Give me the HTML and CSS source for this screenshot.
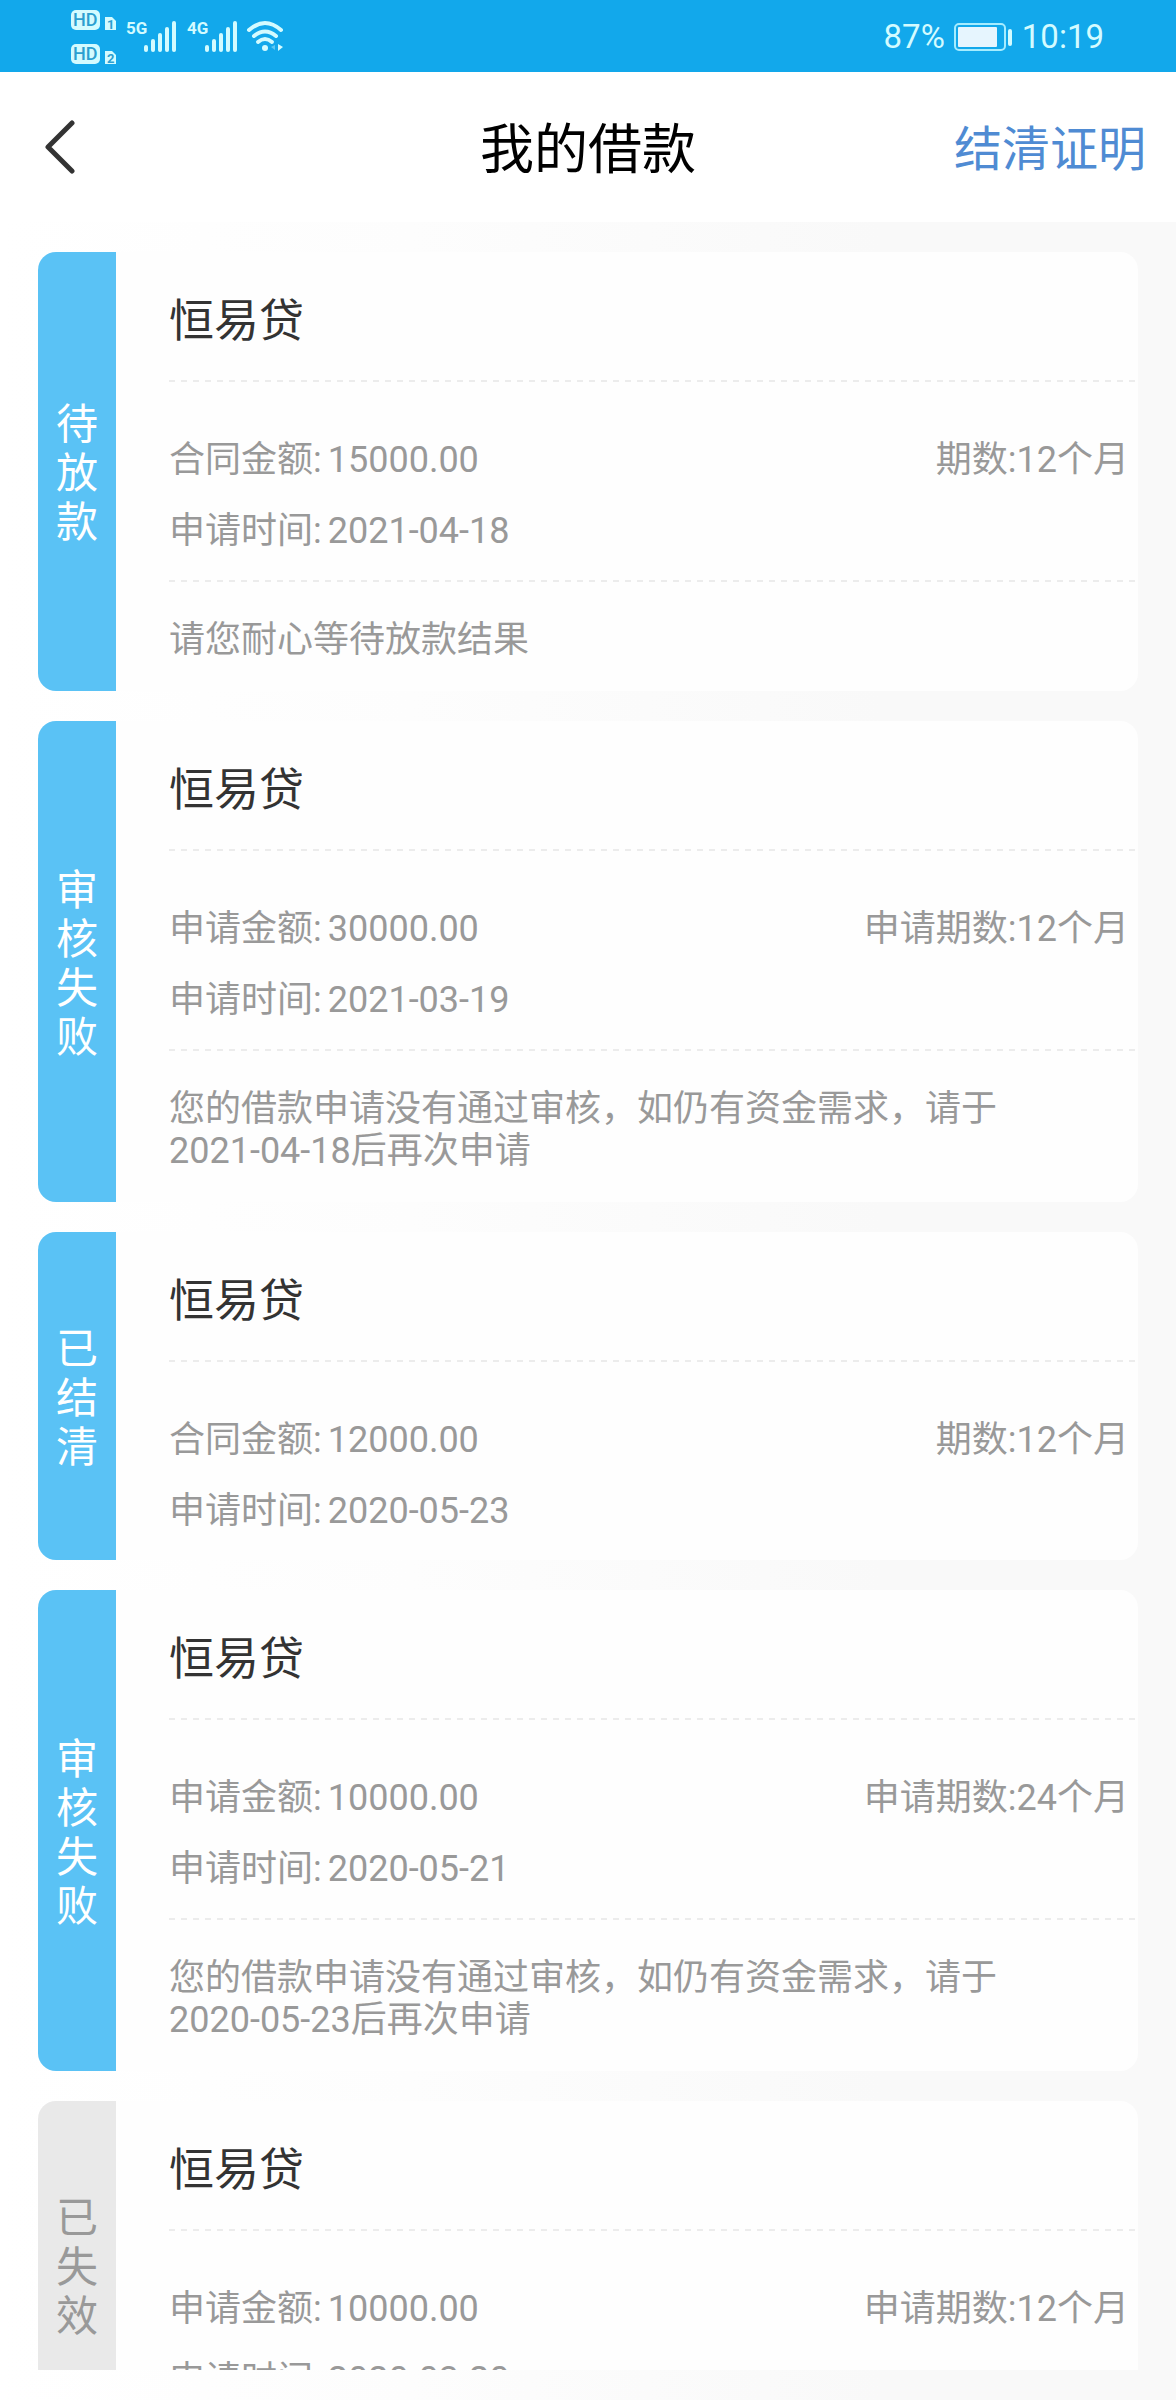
FILE: index.html
```html
<!DOCTYPE html>
<html lang="zh-CN">
<head>
  <meta charset="utf-8">
  <title>我的借款</title>
  <meta name="viewport" content="width=device-width, initial-scale=1">
  <link rel="stylesheet" href="styles.css">
</head>
<body>
  <div class="status-bar">
    <svg class="signals" width="216" height="72" viewBox="0 0 216 72" fill="#d3fbff">
      <!-- HD 1 / HD 2 -->
      <rect x="0" y="10" width="29" height="20" rx="5"/>
      <rect x="0" y="44" width="29" height="20" rx="5"/>
      <path d="M34 17h7l4 4v9h-11z M34 51h7l4 4v9h-11z"/>
      <g class="hd-text">
        <text x="2" y="26">HD</text>
        <text x="2" y="60">HD</text>
        <text class="sim" x="36" y="29">1</text>
        <text class="sim" x="36" y="63">2</text>
      </g>
      <g class="net-text">
        <text x="55" y="34">5G</text>
        <text x="116" y="34">4G</text>
      </g>
      <!-- signal bars -->
      <g id="bars">
        <rect x="73" y="45" width="4" height="7" rx="2"/>
        <rect x="80" y="39" width="4" height="13" rx="2"/>
        <rect x="87" y="33" width="4" height="19" rx="2"/>
        <rect x="94" y="27" width="4" height="25" rx="2"/>
        <rect x="101" y="21" width="4" height="31" rx="2"/>
      </g>
      <use href="#bars" x="61"/>
      <!-- wifi -->
      <g fill="none" stroke="#d3fbff" stroke-width="4" stroke-linecap="round">
        <path d="M178 30Q194 16 210 30"/>
        <path d="M183 36Q194 27 205 36"/>
        <path d="M187 42Q194 36 201 42"/>
      </g>
      <circle cx="194" cy="48" r="3"/>
      <path d="M207 44v7l5-4z"/>
      <path d="M204 45v5l-4-3z" opacity="0.4"/>
    </svg>
    <div class="power">
      <span>87%</span>
      <svg width="59" height="28" viewBox="0 0 59 28">
        <rect x="1" y="1" width="50" height="26" rx="4" fill="none" stroke="#a5ecff" stroke-width="2"/>
        <rect x="4" y="4" width="39" height="20" rx="1" fill="#e6f5fe"/>
        <rect x="54" y="6" width="4" height="17" rx="2" fill="#d3fbff"/>
      </svg>
      <span>10:19</span>
    </div>
  </div>

  <header class="header">
    <button type="button" class="back" aria-label="返回">
      <svg width="30" height="54" viewBox="0 0 30 54" fill="none" stroke="#333" stroke-width="5" stroke-linecap="round" stroke-linejoin="round">
        <path d="M27 3L3 27L27 51"/>
      </svg>
    </button>
    <h1>我的借款</h1>
    <a class="proof" href="#">结清证明</a>
  </header>

  <main class="list">
    <section class="card">
      <div class="state"><span>待放款</span></div>
      <div class="content">
        <h2>恒易贷</h2>
        <div class="info">
          <p><span class="label">合同金额:</span><span>15000.00</span><span class="term">期数:12个月</span></p>
          <p><span class="label">申请时间:</span><span>2021-04-18</span></p>
        </div>
        <div class="note">请您耐心等待放款结果</div>
      </div>
    </section>

    <section class="card">
      <div class="state"><span>审核失败</span></div>
      <div class="content">
        <h2>恒易贷</h2>
        <div class="info">
          <p><span class="label">申请金额:</span><span>30000.00</span><span class="term">申请期数:12个月</span></p>
          <p><span class="label">申请时间:</span><span>2021-03-19</span></p>
        </div>
        <div class="note">您的借款申请没有通过审核，如仍有资金需求，请于<span class="date">2021-04-18</span>后再次申请</div>
      </div>
    </section>

    <section class="card">
      <div class="state"><span>已结清</span></div>
      <div class="content">
        <h2>恒易贷</h2>
        <div class="info">
          <p><span class="label">合同金额:</span><span>12000.00</span><span class="term">期数:12个月</span></p>
          <p><span class="label">申请时间:</span><span>2020-05-23</span></p>
        </div>
      </div>
    </section>

    <section class="card">
      <div class="state"><span>审核失败</span></div>
      <div class="content">
        <h2>恒易贷</h2>
        <div class="info">
          <p><span class="label">申请金额:</span><span>10000.00</span><span class="term">申请期数:24个月</span></p>
          <p><span class="label">申请时间:</span><span>2020-05-21</span></p>
        </div>
        <div class="note">您的借款申请没有通过审核，如仍有资金需求，请于<span class="date">2020-05-23</span>后再次申请</div>
      </div>
    </section>

    <section class="card expired">
      <div class="state"><span>已失效</span></div>
      <div class="content">
        <h2>恒易贷</h2>
        <div class="info">
          <p><span class="label">申请金额:</span><span>10000.00</span><span class="term">申请期数:12个月</span></p>
          <p><span class="label">申请时间:</span><span>2020-03-20</span></p>
        </div>
      </div>
    </section>
  </main>
</body>
</html>
```
FILE: styles.css
```css
* {
  box-sizing: border-box;
}

body {
  display: flex;
  flex-direction: column;
  height: 100vh;
  margin: 0;
  padding-bottom: 30px;
  font-family: Roboto, "Noto Sans CJK SC", sans-serif;
  font-size: 36px;
  line-height: 42px;
  color: #999;
  background: linear-gradient(to right, #fff 0%, #fdfdfd 35%, #f9f9f9 75%);
}

h1,
h2,
p {
  margin: 0;
  font-weight: 400;
}

.status-bar {
  display: flex;
  flex-shrink: 0;
  justify-content: space-between;
  align-items: center;
  height: 72px;
  padding: 0 72px 0 71px;
  background-color: #12a8eb;
  color: #d3fbff;
}

.hd-text {
  font-size: 18px;
  font-weight: 500;
  fill: #2c9fd0;
}

.hd-text .sim {
  font-size: 13px;
  font-weight: 700;
}

.net-text {
  font-size: 17px;
  font-weight: 700;
}

.power {
  display: flex;
  align-items: center;
  gap: 9px;
  padding-top: 2px;
  font-size: 33px;
}

.header {
  display: grid;
  flex-shrink: 0;
  grid-template-columns: 1fr auto 1fr;
  align-items: center;
  height: 150px;
  padding: 0 30px;
  background-color: #fff;
}

.header h1 {
  padding-top: 8px;
  font-size: 54px;
  line-height: 60px;
  color: #000;
}

.back {
  justify-self: start;
  padding: 0 15px;
  border: none;
  background: none;
  cursor: pointer;
}

.back svg {
  display: block;
}

.proof {
  justify-self: end;
  padding-top: 6px;
  font-size: 48px;
  line-height: 54px;
  color: #4f8bd3;
  text-decoration: none;
}

.list {
  display: flex;
  flex: 1;
  flex-direction: column;
  gap: 30px;
  min-height: 0;
  padding: 30px 38px 0;
  overflow-y: auto;
  scrollbar-width: none;
}

.card {
  display: flex;
  flex-shrink: 0;
  border-radius: 18px;
  background-color: #fefefe;
  overflow: hidden;
}

.state {
  display: flex;
  flex-shrink: 0;
  align-items: center;
  justify-content: center;
  width: 78px;
  padding-top: 4px;
  background-color: #5ac2f5;
  color: #fff;
  font-size: 42px;
  line-height: 49px;
}

/* one character per line */
.state span {
  width: 42px;
  word-break: break-all;
}

.expired .state {
  background-color: #e9e9e9;
  color: #999;
}

.content {
  flex: 1;
  padding-left: 53px;
}

.content h2 {
  padding: 44px 0 34px;
  font-size: 45px;
  line-height: 52px;
  color: #333;
}

/* dashed dividers */
.content h2,
.note {
  background: repeating-linear-gradient(to right, #ececec 0 6px, transparent 6px 12px) no-repeat;
  background-size: 100% 2px;
}

.content h2 {
  background-position: left bottom;
}

.info {
  display: flex;
  flex-direction: column;
  gap: 29px;
  padding: 57px 9px 28px 0;
}

.info p {
  display: flex;
}

.label {
  margin-right: 6px;
}

.term {
  margin-left: auto;
}

.note {
  padding: 39px 9px 30px 0;
}

.date {
  white-space: nowrap;
}
```
